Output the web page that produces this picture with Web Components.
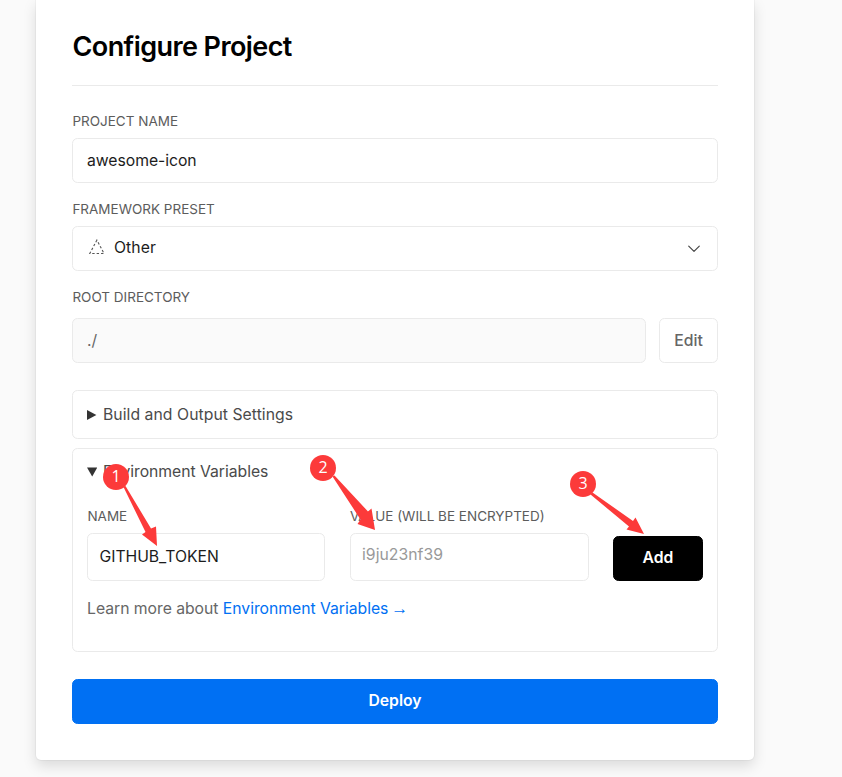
<!DOCTYPE html>
<html lang="en">
<head>
<meta charset="utf-8">
<title>Configure Project</title>
<style>
html,body{margin:0;height:100%;overflow:hidden;background:#fafafa}
body{font-family:Inter,"Liberation Sans",sans-serif;font-size:15.75px;color:#000}
</style>
</head>
<body>
<configure-page></configure-page>
<script>
const define = (name, html) => {
  const t = document.createElement('template');
  t.innerHTML = html;
  customElements.define(name, class extends HTMLElement {
    constructor() {
      super();
      this.attachShadow({mode: 'open'}).appendChild(t.content.cloneNode(true));
    }
  });
};

define('section-title', `<style>
:host{display:block;border-bottom:1px solid #eaeaea;box-sizing:border-box;height:86px}
h1{margin:0;padding:31px 0 0 .5px;font-size:27px;line-height:32px;font-weight:600;letter-spacing:-0.58px}
</style><h1><slot></slot></h1>`);

define('field-label', `<style>
:host{display:block;font-size:13.5px;line-height:18px;color:#5c5c5c;white-space:nowrap;padding-left:.4px}
</style><slot></slot>`);

define('text-box', `<style>
:host{display:flex;align-items:center;gap:8px;box-sizing:border-box;height:45px;border:1px solid #eaeaea;border-radius:5.5px;background:#fff;color:#1c1c1c;padding:0 14px;line-height:20px;white-space:nowrap;letter-spacing:-.05px}
:host([muted]){background:#fafafa;color:#666}
:host([select]){gap:9px;padding-bottom:2px;letter-spacing:.05px}
:host([tall]){height:48px;padding:0 11.5px}
:host([placeholder]){color:#999;padding-bottom:5px;letter-spacing:.03px}
span{flex:1}
</style><slot name="icon"></slot><span><slot></slot></span><slot name="end"></slot>`);

define('action-button', `<style>
:host{display:block}
button{display:block;width:100%;height:45px;box-sizing:border-box;border:1px solid var(--line,#eaeaea);border-radius:5.5px;background:var(--bg,#fff);color:var(--fg,#666);font:var(--weight,500) 15.75px/20px Inter,sans-serif;padding:0 0 var(--lift,2px)}
</style><button><slot></slot></button>`);

define('dashed-triangle', `<style>:host{display:block;width:18px;height:18px}svg{display:block}</style>
<svg width="18" height="18" viewBox="0 0 18 18" fill="none" stroke="#555" stroke-width="1.1" stroke-dasharray="2.4 2"><path d="M9.9 1.100L2.8 14.5H17Z"/></svg>`);

define('chevron-down', `<style>:host{display:block;width:18px;height:18px}svg{display:block}</style>
<svg width="18" height="18" viewBox="0 0 18 18" fill="none" stroke="#444" stroke-width="1.15" stroke-linecap="round" stroke-linejoin="round"><path d="M3.7 7.1L9 12.4L14.3 7.1"/></svg>`);

define('disclosure-panel', `<style>
:host{display:block;box-sizing:border-box;border:1px solid #eaeaea;border-radius:5.5px;padding:14px 14px 0;height:49px}
:host([open]){height:204px;padding-top:13px}
.head{display:flex;align-items:center;gap:6px;height:20px;line-height:20px;color:#4a4a4a;white-space:nowrap;letter-spacing:.05px}
:host([open]) .head{letter-spacing:-.04px}
svg{display:block;width:10px;height:12px}
.down{display:none}
:host([open]) .down{display:block}
:host([open]) .right{display:none}
</style><div class="head"><svg class="right" viewBox="0 0 10 12"><path d="M0 1V11L9.4 6Z" fill="#333"/></svg><svg class="down" viewBox="0 0 10 12"><path d="M0 1.4H10.4L5.2 10.4Z" fill="#333"/></svg><slot name="title"></slot></div><slot></slot>`);

define('variable-form', `<style>
:host{display:grid;grid-template-columns:238px 239px 90px;justify-content:space-between;align-items:end;margin-top:25px}
field-label{margin-bottom:8px}
.learn{grid-column:1/-1;margin-top:18px;height:20px;line-height:20px;color:#666;white-space:nowrap;letter-spacing:-.03px}
a{color:#0070f3;text-decoration:none}
i{font:17px/1 "Liberation Sans",sans-serif;vertical-align:.5px}
.gap{letter-spacing:-1.500px}
action-button{--bg:#000;--line:#000;--fg:#fff;--weight:600}
</style>
<div><field-label>NAME</field-label><text-box tall>GITHUB_TOKEN</text-box></div>
<div><field-label>VALUE (WILL BE ENCRYPTED)</field-label><text-box tall placeholder>i9ju23nf39</text-box></div>
<action-button>Add</action-button>
<div class="learn">Learn more about <a>Environment Variables<span class="gap"> </span><i>→</i></a></div>`);

define('project-card', `<style>
:host{display:block;box-sizing:border-box;width:718px;height:760px;margin-left:36px;padding:0 36px;background:#fff;border-radius:0 0 5px 5px;box-shadow:0 0 0 1px rgba(0,0,0,.03),0 6px 14px rgba(0,0,0,.13)}
</style><slot></slot>`);

/* Numbered markers with tapered arrows, laid over the form */
define('step-markers', `<style>
:host{position:absolute;inset:0;pointer-events:none}
svg{display:block}
text{font:16px "Open Sans","Noto Sans",sans-serif;fill:#fff;text-anchor:middle}
</style><svg width="842" height="777" viewBox="0 0 842 777"><g fill="#fc3a3a">
<circle cx="116" cy="477" r="13"/><circle cx="323" cy="468" r="13"/><circle cx="583" cy="484" r="13"/>
<path d="M123.500 487L125.500 486L151 528.500L156 526.500L157 546L142 534.500L145.500 532Z"/>
<path d="M332.500 476.500L334.500 475.500L368 511.500L371.500 508.500L375 530L357.500 524L360.500 519.500Z"/>
<path d="M590.500 494.500L592.500 492.500L633 521L635.500 517.500L644 534L626.500 529.500L629 526.500Z"/></g>
<text x="116" y="481.500">1</text><text x="323" y="472.500">2</text><text x="583" y="488.500">3</text></svg>`);

define('configure-page', `<style>
:host{display:block;position:relative;height:777px;overflow:hidden}
.l1{margin-top:26px}.b{margin-top:8px}.l2,.l3{margin-top:17px}
.root{display:grid;grid-template-columns:574px 59px;gap:13px;margin-top:12px;--lift:0}
.p1{margin-top:27px}.p2{margin-top:9px}
.deploy{margin-top:27px;--bg:#0070f3;--line:#0070f3;--fg:#fff;--weight:600}
</style>
<project-card>
<section-title>Configure Project</section-title>
<field-label class="l1">PROJECT NAME</field-label>
<text-box class="b">awesome-icon</text-box>
<field-label class="l2">FRAMEWORK PRESET</field-label>
<text-box class="b" select><dashed-triangle slot="icon"></dashed-triangle>Other<chevron-down slot="end"></chevron-down></text-box>
<field-label class="l3">ROOT DIRECTORY</field-label>
<div class="root"><text-box muted>./</text-box><action-button>Edit</action-button></div>
<disclosure-panel class="p1"><span slot="title">Build and Output Settings</span></disclosure-panel>
<disclosure-panel class="p2" open><span slot="title">Environment Variables</span><variable-form></variable-form></disclosure-panel>
<action-button class="deploy">Deploy</action-button>
</project-card>
<step-markers></step-markers>`);
</script>
</body>
</html>
